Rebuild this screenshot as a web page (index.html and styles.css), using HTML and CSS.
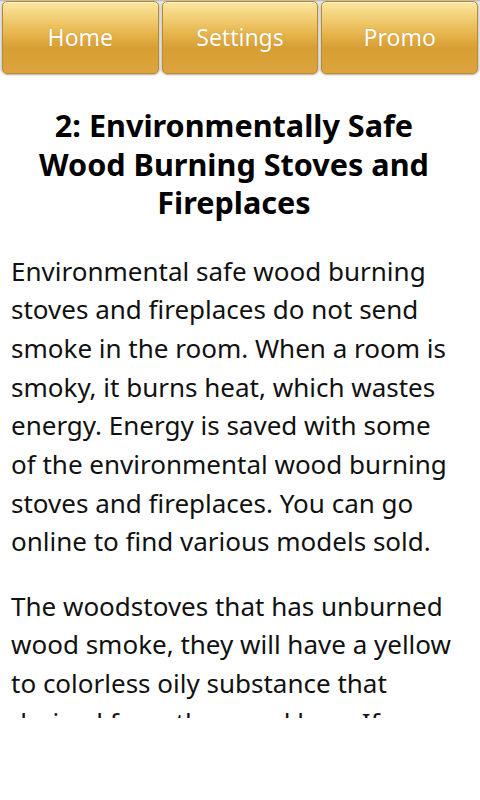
FILE: index.html
```html
<!DOCTYPE html>
<html lang="en">
<head>
<meta charset="utf-8">
<title>Wood Burning Stoves</title>
<link rel="stylesheet" href="styles.css">
</head>
<body>
<nav class="tabs">
  <a class="tab" href="#">Home</a>
  <a class="tab" href="#">Settings</a>
  <a class="tab" href="#">Promo</a>
</nav>
<main class="content">
  <h1 class="title">2: Environmentally Safe Wood Burning Stoves and Fireplaces</h1>
  <p class="para">Environmental safe wood burning stoves and fireplaces do not send smoke in the room. When a room is smoky, it burns heat, which wastes energy. Energy is saved with some of the environmental wood burning stoves and fireplaces. You can go online to find various models sold.</p>
  <p class="para">The woodstoves that has unburned wood smoke, they will have a yellow to colorless oily substance that derived from the wood logs. If you burn wood that is not dry, creosote builds up in the chimney.</p>
</main>
</body>
</html>
```
FILE: styles.css
```css
html, body {
  margin: 0;
  padding: 0;
  background: #ffffff;
}
body {
  width: 480px;
  height: 800px;
  font-family: "Noto Sans", "Open Sans", "DejaVu Sans", sans-serif;
  color: #111111;
}
.tabs {
  display: flex;
  gap: 3px;
  padding: 1px 2px 0 2px;
  height: 72px;
  background: linear-gradient(#b9b2a0 0, #e4e6ea 2px, #e4e6ea 70px, #ffffff 73px);
}
.tab {
  flex: 1;
  display: flex;
  align-items: center;
  justify-content: center;
  height: 69px;
  border: 1px solid #b88a30;
  border-radius: 5px;
  background: linear-gradient(#fde7a3 0%, #f3d179 20%, #e6b44c 45%, #d79e33 65%, #dba43d 100%);
  box-shadow: inset 0 1px 0 rgba(255, 246, 210, 0.8), 0 1px 2px rgba(90, 70, 30, 0.45);
  color: #ffffff;
  font-size: 23px;
  text-decoration: none;
  text-shadow: 0 0 1px rgba(150, 100, 20, 0.5);
  padding-bottom: 2px;
}
.content {
  height: 645px;
  overflow: hidden;
  padding: 0 23px 0 11px;
}
.title {
  margin: 33px 0 30px 0;
  padding: 0 16px;
  font-size: 30.6px;
  line-height: 38.5px;
  font-weight: bold;
  text-align: center;
  color: #000000;
}
.para {
  margin: 0 0 25.4px 0;
  font-size: 26px;
  line-height: 38.7px;
  color: #111111;
}
```
